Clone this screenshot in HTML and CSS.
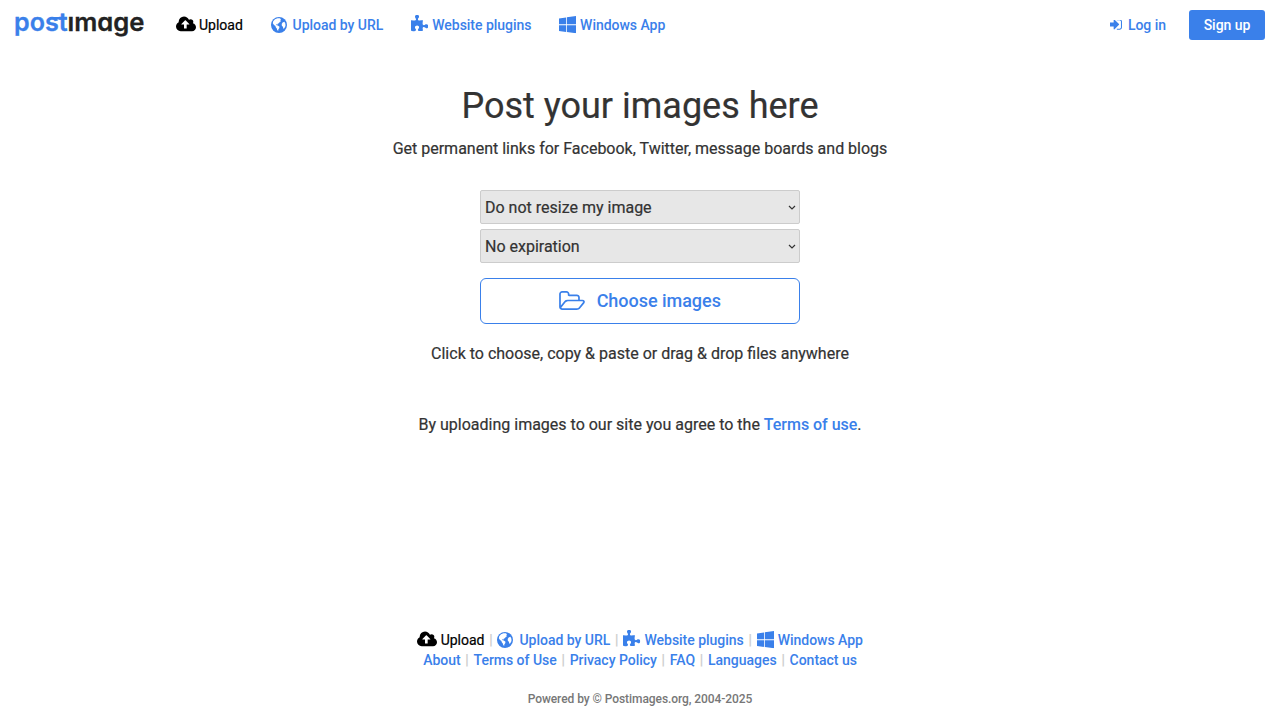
FILE: index.html
```html
<!DOCTYPE html>
<html lang="en">
<head>
<meta charset="utf-8">
<title>Postimage</title>
<link rel="stylesheet" href="styles.css">
</head>
<body>
<svg class="sprite" aria-hidden="true">
  <symbol id="cloud" viewBox="0 0 1920 1792"><path d="M1280 864q0-14-9-23l-352-352q-9-9-23-9t-23 9l-351 351q-10 12-10 24 0 14 9 23t23 9h224v352q0 13 9.5 22.5t22.5 9.5h192q13 0 22.5-9.5t9.5-22.5v-352h224q13 0 22.5-9.5t9.5-22.5zm640 288q0 159-112.5 271.5t-271.5 112.5h-1088q-185 0-316.5-131.5t-131.5-316.5q0-130 70-240t188-165q-2-30-2-43 0-212 150-362t362-150q156 0 285.5 87t188.5 231q71-62 166-62 106 0 181 75t75 181q0 76-41 138 130 31 213.5 135.5t83.5 238.5z"/></symbol>
  <symbol id="globe" viewBox="0 0 16 16"><circle cx="8" cy="8" r="8"/><path fill="#fff" d="M2.200 4.200 4 2.300 6.500 1.200 8.800 1.300 10 2.300 9.300 3.300 10 4.200 8.600 5 8.200 6 6.700 6.700 6.400 7.700 5.300 7.200 5 8 6.800 8.500 8.500 9.800 8.200 11.200 7.300 12.400 7.200 13.900 6.200 13.100 5.800 11.400 4.600 10.100 4.500 8.900 3 8 1.800 6.200ZM11.600 5.400 13.400 4.800 14.400 6.800 14.500 9 13.300 11.300 12.200 11.700 12 9.800 10.900 8.900 10.700 7.100Z"/></symbol>
  <symbol id="puzzle" viewBox="90 0 1665 1792"><path d="M1755 1083q0 81-44.5 135t-123.5 54q-41 0-77.5-17.5t-59-38-56.5-38-71-17.5q-110 0-110 124 0 39 16 115t15 115v5q-22 0-33 1-34 3-97.5 11.5t-115.5 13.5-98 5q-61 0-103-26.5t-42-83.5q0-37 17.5-71t38-56.5 38-59 17.5-77.5q0-79-54-123.5t-135-44.5q-84 0-143 45.5t-59 127.5q0 43 15 83t33.5 64.5 33.5 53 15 50.5q0 45-46 89-37 35-117 35-95 0-245-24-9-2-27.5-4t-27.5-4l-13-2q-1 0-3-1-2 0-2-1v-1024q2 1 17.5 3.5t34 5 21.5 3.5q150 24 245 24 80 0 117-35 46-44 46-89 0-22-15-50.5t-33.5-53-33.5-64.5-15-83q0-82 59-127.5t144-45.5q80 0 134 44.5t54 123.5q0 41-17.5 77.5t-38 59-38 56.5-17.5 71q0 57 42 83.5t103 26.5q64 0 180-15t163-17v2q-1 2-3.5 17.5t-5 34-3.5 21.5q-24 150-24 245 0 80 35 117 44 46 89 46 22 0 50.5-15t53-33.5 64.5-33.5 83-15q82 0 127.5 59t45.5 143z"/></symbol>
  <symbol id="windows" viewBox="64 128 1664 1664"><path d="M746 1006v651l-682-94v-557h682zm0-743v659h-682v-565zm982 743v786l-907-125v-661h907zm0-878v794h-907v-669z"/></symbol>
  <symbol id="signin" viewBox="192 384 1472 1152"><path d="M1312 896q0 26-19 45l-544 544q-19 19-45 19t-45-19-19-45v-288h-448q-26 0-45-19t-19-45v-384q0-26 19-45t45-19h448v-288q0-26 19-45t45-19 45 19l544 544q19 19 19 45zm352-352v704q0 119-84.500 203.500t-203.500 84.500h-320q-13 0-22.500-9.500t-9.500-22.500q0-4-1-20t-.5-26.500 3-23.500 10-19.500 20.500-6.500h320q66 0 113-47t47-113v-704q0-66-47-113t-113-47h-312l-11.500-1-11.500-3-8-5.500-7-9-2-13.500q0-4-1-20t-.5-26.500 3-23.500 10-19.500 20.500-6.500h320q119 0 203.500 84.500t84.500 203.500z"/></symbol>
  <symbol id="folder" viewBox="-64 128 1909 1408"><path d="M1717 931q0-35-53-35h-1088q-40 0-85.500 21.500t-71.500 52.500l-294 363q-18 24-18 40 0 35 53 35h1088q40 0 86-22t71-53l294-363q18-22 18-39zm-1141-163h768v-160q0-40-28-68t-68-28h-576q-40 0-68-28t-28-68v-64q0-40-28-68t-68-28h-320q-40 0-68 28t-28 68v853l256-315q44-53 116-87.500t140-34.500zm1269 163q0 62-46 120l-295 363q-43 53-116 87.500t-140 34.500h-1088q-92 0-158-66t-66-158v-960q0-92 66-158t158-66h320q92 0 158 66t66 158v32h544q92 0 158 66t66 158v160h192q54 0 99 24.500t67 70.500q15 32 15 68z"/></symbol>
</svg>
<header class="topbar">
  <a class="logo" aria-label="postimage">
    <svg width="130" height="28" viewBox="0 0 130 28">
      <text class="logo-post" x="-1" y="19.500" textLength="53.500" lengthAdjust="spacingAndGlyphs">post</text>
      <rect class="logo-bar" x="35" y="6" width="17" height="2.500"/>
      <text class="logo-image" x="52.500" y="19.500" textLength="77" lengthAdjust="spacingAndGlyphs">ımage</text>
    </svg>
  </a>
  <nav class="nav">
    <a class="item current"><svg class="i-cloud"><use href="#cloud"/></svg>Upload</a>
    <a class="item"><svg class="i-globe"><use href="#globe"/></svg>Upload by URL</a>
    <a class="item"><svg class="i-puzzle"><use href="#puzzle"/></svg>Website plugins</a>
    <a class="item"><svg class="i-windows"><use href="#windows"/></svg>Windows App</a>
  </nav>
  <a class="login"><svg class="i-signin"><use href="#signin"/></svg>Log in</a>
  <a class="signup">Sign up</a>
</header>
<main class="main">
  <h1 class="title">Post your images here</h1>
  <p class="lead">Get permanent links for Facebook, Twitter, message boards and blogs</p>
  <div class="form">
    <div class="select">Do not resize my image<svg class="chevron" viewBox="0 0 8 6"><path d="M1 1l3 3 3-3"/></svg></div>
    <div class="select">No expiration<svg class="chevron" viewBox="0 0 8 6"><path d="M1 1l3 3 3-3"/></svg></div>
    <div class="choose"><svg class="i-folder"><use href="#folder"/></svg>Choose images</div>
  </div>
  <p class="hint">Click to choose, copy &amp; paste or drag &amp; drop files anywhere</p>
  <p class="terms">By uploading images to our site you agree to the <a>Terms of use</a>.</p>
</main>
<footer class="footer">
  <div class="row">
    <a class="item current"><svg class="i-cloud"><use href="#cloud"/></svg>Upload</a><span class="sep">|</span>
    <a class="item"><svg class="i-globe"><use href="#globe"/></svg>Upload by URL</a><span class="sep">|</span>
    <a class="item"><svg class="i-puzzle"><use href="#puzzle"/></svg>Website plugins</a><span class="sep">|</span>
    <a class="item"><svg class="i-windows"><use href="#windows"/></svg>Windows App</a>
  </div>
  <div class="row">
    <a class="item">About</a><span class="sep">|</span>
    <a class="item">Terms of Use</a><span class="sep">|</span>
    <a class="item">Privacy Policy</a><span class="sep">|</span>
    <a class="item">FAQ</a><span class="sep">|</span>
    <a class="item">Languages</a><span class="sep">|</span>
    <a class="item">Contact us</a>
  </div>
  <p class="powered">Powered by © Postimages.org, 2004-2025</p>
</footer>
</body>
</html>
```
FILE: styles.css
```css
* { box-sizing: border-box; }
body {
  margin: 0;
  height: 720px;
  display: flex;
  flex-direction: column;
  overflow: hidden;
  background: #fff;
  color: #333;
  font: 400 16px/24px Roboto, sans-serif;
  -webkit-text-stroke: 0.2px currentColor;
}
p, h1 { margin: 0; }
a { color: #3a80ea; font-weight: 500; letter-spacing: -0.03px; -webkit-text-stroke: 0; }
svg { fill: currentColor; flex: none; }
.sprite { display: none; }
.topbar { display: flex; align-items: center; height: 50px; padding: 0 15px; font-size: 14px; line-height: 20px; }
.logo { display: flex; width: 130px; margin-right: 30.5px; letter-spacing: 0; }
.logo svg { overflow: visible; }
.logo text { font: 600 25px Inter, sans-serif; font-feature-settings: "cv11"; stroke-width: 0.3px; }
.logo-post, .logo-bar { fill: #3a80ea; }
.logo-post { stroke: #3a80ea; }
.logo-image { fill: #222; stroke: #222; }
.nav { display: flex; gap: 27.7px; }
.item, .login { display: flex; align-items: center; white-space: nowrap; }
.current { color: #000; font-weight: 400; letter-spacing: 0; -webkit-text-stroke: 0.2px #000; }
.i-cloud { width: 20px; height: 19px; margin: -1px 3.5px 0 0; }
.i-globe { width: 16px; height: 16px; margin: -1px 6px 0 0; }
.i-puzzle { width: 17.3px; height: 18.6px; margin: -1px 4px 0 0; }
.i-windows { width: 17.3px; height: 17.3px; margin-right: 3.7px; }
.i-signin { width: 12px; height: 10px; margin-right: 6px; }
.login { margin-left: auto; }
.signup { margin-left: 23px; width: 76px; height: 30px; border-radius: 3px; background: #3a80ea; color: #fff; text-align: center; line-height: 30px; }
.main { flex: 1; display: flex; flex-direction: column; align-items: center; padding-top: 36px; text-align: center; }
.title { font-size: 36px; font-weight: 400; line-height: 40px; }
.lead { margin-top: 11px; }
.form { display: flex; flex-direction: column; gap: 5px; width: 320px; margin-top: 29px; }
.select { display: flex; align-items: center; justify-content: space-between; height: 34px; padding: 2px 4px 0; border: 1px solid #ccc; border-radius: 2px; background: #e7e7e7; }
.chevron { width: 8px; height: 6px; margin-right: -1px; fill: none; stroke: #333; stroke-width: 1.2; }
.choose { display: flex; align-items: center; justify-content: center; height: 46px; margin-top: 10px; border: 1px solid #3a80ea; border-radius: 6px; color: #3a80ea; font-size: 18px; font-weight: 500; letter-spacing: -0.03px; -webkit-text-stroke: 0; }
.i-folder { width: 26px; height: 19px; margin: -2px 11.5px 0 0; }
.hint { margin-top: 18px; }
.terms { margin-top: 47px; }
.footer { height: 90px; font-size: 14px; line-height: 20px; }
.row { display: flex; justify-content: center; height: 20px; }
.sep { width: 13px; text-align: center; color: #ccc; }
.powered { margin-top: 19px; color: #777; font-size: 12px; font-weight: 500; letter-spacing: -0.07px; line-height: 20px; text-align: center; -webkit-text-stroke: 0; }
```
